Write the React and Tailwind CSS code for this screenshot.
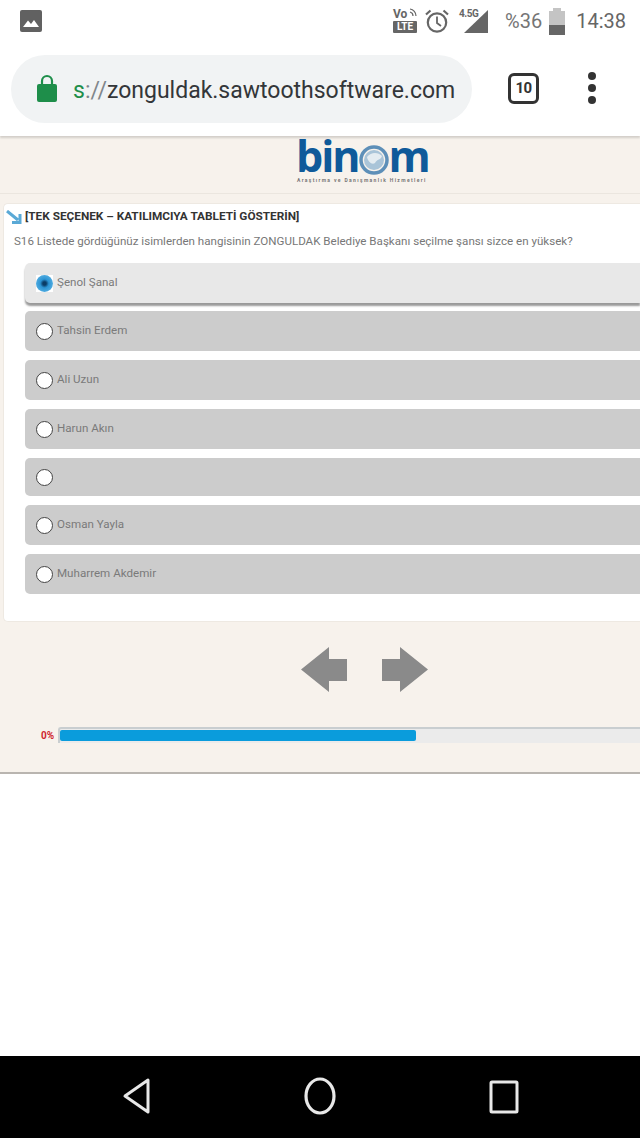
import React from 'react';

const options = [
  { label: 'Şenol Şanal', selected: true, height: 'h-10', gap: 'mb-2' },
  { label: 'Tahsin Erdem', height: 'h-10', gap: 'mb-[9px]' },
  { label: 'Ali Uzun', height: 'h-10', gap: 'mb-[9px]' },
  { label: 'Harun Akın', height: 'h-10', gap: 'mb-[9px]' },
  { label: '', height: 'h-[38px]', gap: 'mb-[9px]' },
  { label: 'Osman Yayla', height: 'h-10', gap: 'mb-[9px]' },
  { label: 'Muharrem Akdemir', height: 'h-10', gap: '' },
];

const StatusBar = () => (
  <div className="h-10 flex items-center pt-[2px] pl-[20px] pr-[14px] bg-white text-[#666666]">
    {/* Gallery notification */}
    <svg width="22" height="22" viewBox="0 0 22 22">
      <rect width="22" height="22" rx="2" fill="#616161" />
      <path d="M3 17 L8 10.5 L11 14 L14 10 L19 17 Z" fill="#ffffff" />
    </svg>
    <div className="ml-auto flex items-center">
      {/* VoLTE */}
      <div className="w-[24px] h-[26px] flex flex-col items-center mt-[-1px]">
        <div className="relative h-[13px] w-full text-[12px] leading-[13px] font-bold">
          Vo
          <svg className="absolute right-0 top-0" width="8" height="10" viewBox="0 0 8 10" fill="none" stroke="#666666" strokeWidth="1.2">
            <path d="M1 1 A7 7 0 0 1 7 8" />
            <path d="M1 4 A4 4 0 0 1 4 8" />
          </svg>
        </div>
        <div className="h-[12px] w-full bg-[#666666] rounded-[1px] text-white text-[10px] leading-[12px] font-bold text-center">LTE</div>
      </div>
      {/* Alarm */}
      <svg className="ml-[7px]" width="26" height="26" viewBox="0 0 26 26" fill="none" stroke="#666666" strokeWidth="2.2">
        <circle cx="13" cy="14.5" r="9.2" />
        <path d="M13 8.5 V15 L17 18" strokeWidth="1.8" />
        <path d="M2 6.5 L6.5 2.5 M24 6.5 L19.5 2.5" />
      </svg>
      {/* Signal */}
      <div className="relative w-[32px] h-[26px] ml-[9px]">
        <svg className="absolute left-0 top-0" width="32" height="26" viewBox="0 0 32 26">
          <path d="M5 25 L29 2 V25 Z" fill="#666666" />
        </svg>
        <span className="absolute left-[0px] top-[0px] text-[10px] leading-[11px] font-bold tracking-[-0.5px] text-[#666666]">4.5G</span>
      </div>
      <span className="ml-[14px] text-[20px] leading-none text-[#757575]">%36</span>
      {/* Battery */}
      <div className="ml-[7px] w-[16px] h-[27px] flex flex-col items-center">
        <div className="w-[8px] h-[3px] bg-[#c4c4c4]" />
        <div className="w-full flex-1 flex flex-col">
          <div className="flex-1 bg-[#c4c4c4]" />
          <div className="h-[10px] bg-[#666666]" />
        </div>
      </div>
      <span className="ml-[11px] text-[20px] leading-none text-[#666666]">14:38</span>
    </div>
  </div>
);

const Toolbar = () => (
  <div className="h-24 flex items-center bg-white pl-[11px] relative z-10 shadow-[0_2px_2px_rgba(0,0,0,0.15)]">
    <div className="w-[461px] h-[68px] mt-[2px] rounded-[34px] bg-[#f1f3f4] flex items-center pl-[27px] overflow-hidden">
      <svg width="20" height="29" viewBox="0 0 20 29" className="shrink-0 mt-[-3px] ml-[-1px]">
        <path d="M5 12 V8 a5 5 0 0 1 10 0 V12" fill="none" stroke="#1e8e4a" strokeWidth="2.2" />
        <rect y="11" width="20" height="18" rx="2" fill="#1e8e4a" />
      </svg>
      <div className="ml-[16px] mt-[3px] text-[23px] leading-none whitespace-nowrap text-[#333639]">
        <span className="text-[#1e8e4a]">s</span>
        <span className="text-[#80868b]">://</span>
        zonguldak.sawtoothsoftware.com
      </div>
    </div>
    <div className="ml-[36px] w-[31px] h-[31px] border-[3px] border-[#333333] rounded-[6px] flex items-center justify-center text-[15px] font-bold text-[#333333] tracking-[-0.5px]">10</div>
    <div className="ml-[49px] flex flex-col gap-[4px]">
      <div className="w-[8px] h-[8px] rounded-full bg-[#333333]" />
      <div className="w-[8px] h-[8px] rounded-full bg-[#333333]" />
      <div className="w-[8px] h-[8px] rounded-full bg-[#333333]" />
    </div>
  </div>
);

const Logo = () => (
  <div className="h-[58px] border-b border-[#ebe6df] flex flex-col items-start pl-[296px]">
    <div className="h-[40px] flex items-end text-[#0f5a9a] text-[43px] leading-[40px] font-bold tracking-[-2px] font-['Open_Sans',sans-serif]">
      <span>bin</span>
      <svg width="30" height="30" viewBox="0 0 30 30" className="mb-[1px]">
        <circle cx="15" cy="15" r="13" fill="none" stroke="#5d8fb8" strokeWidth="3.5" />
        <circle cx="15" cy="15" r="10" fill="#a9c4d8" />
        <path d="M8 12 C12 7 19 7 23 11 C22 15 18 14 16 18 C13 20 9 17 8 12 Z" fill="#e4ecf1" />
      </svg>
      <span>m</span>
    </div>
    <div className="mt-[1px] ml-[1px] text-[5px] leading-[6px] font-bold tracking-[1.35px] text-[#777777] whitespace-nowrap">Araştırma ve Danışmanlık Hizmetleri</div>
  </div>
);

const Radio = ({ selected }) =>
  selected ? (
    <div className="w-[17px] h-[17px] bg-white">
      <div className="w-full h-full rounded-full bg-[radial-gradient(circle,#0b3c66_0%,#0b3c66_14%,#2c94d4_36%,#6cbde8_100%)]" />
    </div>
  ) : (
    <div className="w-[17px] h-[17px] rounded-full bg-white border border-[#444444]" />
  );

const Option = ({ label, selected, height, gap }) => (
  <div
    className={`${height} ${gap} flex items-center pl-[11px] rounded-l-[5px] ${
      selected ? 'bg-[#e8e8e8] shadow-[0_3px_2px_rgba(0,0,0,0.4)]' : 'bg-[#cccccc]'
    }`}
  >
    <Radio selected={selected} />
    <span className="ml-[4px] text-[11.6px] text-[#7a7a7a]">{label}</span>
  </div>
);

const Question = () => (
  <div className="ml-[3px] mt-[9px] h-[419px] bg-white rounded-tl-[5px] rounded-bl-[5px] border-l border-b border-t border-[#eee9e2] flex flex-col">
    <div className="flex items-center h-[24px] mt-[1px] pl-[2px]">
      <svg width="17" height="15" viewBox="0 0 17 15">
        <path d="M1 1 L12 10 M6 12.5 H14 V4" fill="none" stroke="#5aa9d6" strokeWidth="3" />
      </svg>
      <span className="ml-[2px] text-[11.8px] font-bold text-[#333333] whitespace-nowrap">[TEK SEÇENEK – KATILIMCIYA TABLETİ GÖSTERİN]</span>
    </div>
    <div className="pl-[10px] mt-[1px] h-[22px] text-[11.58px] leading-[22px] text-[#777777] whitespace-nowrap">
      S16 Listede gördüğünüz isimlerden hangisinin ZONGULDAK Belediye Başkanı seçilme şansı sizce en yüksek?
    </div>
    <div className="pl-[21px] mt-[11px]">
      {options.map((o) => (
        <Option key={o.label || 'empty'} {...o} />
      ))}
    </div>
  </div>
);

const NavArrows = () => (
  <div className="mt-[25px] flex gap-[35px] pl-[301px]">
    <svg width="46" height="45" viewBox="0 0 46 45">
      <path d="M0 22.5 L28 0 V12 H46 V34 H28 V45 Z" fill="#8a8a8a" />
    </svg>
    <svg width="46" height="45" viewBox="0 0 46 45">
      <path d="M46 22.5 L18 0 V12 H0 V34 H18 V45 Z" fill="#8a8a8a" />
    </svg>
  </div>
);

const Progress = () => (
  <div className="mt-[35px] flex items-center pl-[41px]">
    <span className="w-[17px] mt-[2px] text-[10px] leading-none font-bold text-[#d0262f]">0%</span>
    <div className="flex-1 h-[16px] bg-[#ebebeb] border-t-2 border-l-2 border-[#c9ced0] rounded-tl-[3px] pt-[1px]">
      <div className="w-[356px] h-[11px] bg-[#0a9cdc] rounded-[2px]" />
    </div>
  </div>
);

const NavBar = () => (
  <div className="h-[82px] bg-black flex items-center">
    <svg className="ml-[120px] mt-[-2px]" width="32" height="40" viewBox="0 0 32 40" fill="none" stroke="#e8e8e8" strokeWidth="3" strokeLinejoin="round">
      <path d="M28 4 V36 L5 20 Z" />
    </svg>
    <svg className="ml-[151px] mt-[-2px]" width="34" height="40" viewBox="0 0 34 40" fill="none" stroke="#e8e8e8" strokeWidth="3.2">
      <ellipse cx="17" cy="20" rx="14" ry="17" />
    </svg>
    <svg className="ml-[152px] mt-[-2px]" width="30" height="36" viewBox="0 0 30 36" fill="none" stroke="#e8e8e8" strokeWidth="3" strokeLinejoin="round">
      <rect x="2" y="4" width="26" height="30" rx="1" />
    </svg>
  </div>
);

export default function App() {
  return (
    <div className="w-[640px] h-[1138px] flex flex-col overflow-hidden bg-white font-['Roboto',sans-serif]">
      <StatusBar />
      <Toolbar />
      <div className="h-[638px] bg-[#f7f2ec] border-b-2 border-[#b9b5b0]">
        <Logo />
        <Question />
        <NavArrows />
        <Progress />
      </div>
      <div className="flex-1" />
      <NavBar />
    </div>
  );
}
